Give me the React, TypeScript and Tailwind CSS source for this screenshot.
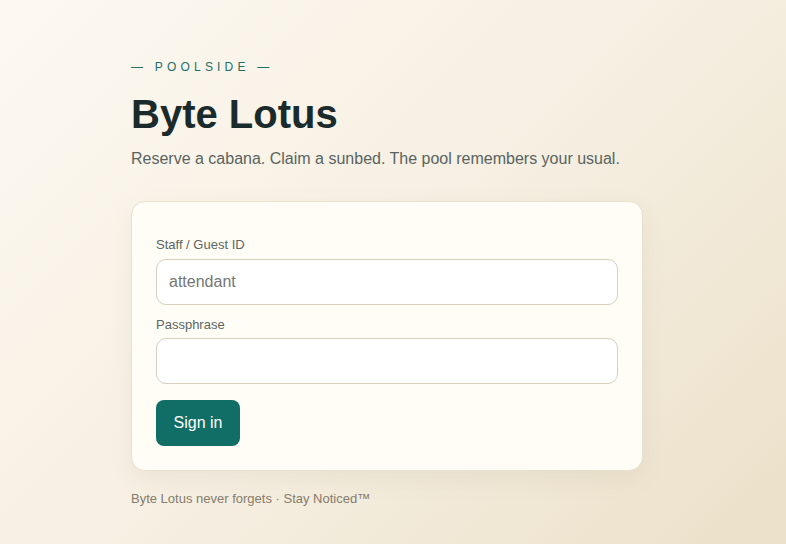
export default function App() {
  return (
    <div
      className="min-h-screen w-full bg-[linear-gradient(135deg,#fdf9f1_0%,#f6efe2_50%,#ebe0c9_100%)] pl-[131px] pt-[59px] pb-10"
      style={{ fontFamily: '"Liberation Sans", Arial, sans-serif' }}
    >
      <div className="w-[512px]">
        {/* Eyebrow */}
        <p className="text-[12px] leading-4 tracking-[0.35em] text-[#1f6f66]">
          — POOLSIDE —
        </p>

        <h1 className="mt-[17px] text-[40px] leading-[44px] font-bold text-[#1b2a2a]">
          Byte Lotus
        </h1>
        <p className="mt-[11px] text-[16px] leading-6 text-[#59645f]">
          Reserve a cabana. Claim a sunbed. The pool remembers your usual.
        </p>

        {/* Sign-in card */}
        <form
          className="mt-[30px] rounded-[14px] border border-[#e9e0cf] bg-[#fffdf6] px-6 pt-[34px] pb-6 shadow-[0_8px_24px_rgba(120,100,60,0.08)]"
          onSubmit={(e) => e.preventDefault()}
        >
          <label className="block text-[13px] leading-[18px] text-[#5c6561]">
            Staff / Guest ID
          </label>
          <input
            type="text"
            placeholder="attendant"
            className="mt-[5px] block h-[46px] w-full rounded-[10px] border border-[#d8cfbd] bg-white px-3 text-[16px] text-[#1b2a2a] placeholder:text-[#767676] outline-none"
          />

          <label className="mt-[11px] block text-[13px] leading-[18px] text-[#5c6561]">
            Passphrase
          </label>
          <input
            type="password"
            className="mt-[4px] block h-[46px] w-full rounded-[10px] border border-[#d8cfbd] bg-white px-3 text-[16px] outline-none"
          />

          <button
            type="submit"
            className="mt-4 h-[46px] w-[84px] rounded-[8px] bg-[#116e66] text-[16px] text-white"
          >
            Sign in
          </button>
        </form>

        <p className="mt-[19px] text-[13px] leading-[18px] text-[#857c6c]">
          Byte Lotus never forgets · Stay Noticed™
        </p>
      </div>
    </div>
  );
}
